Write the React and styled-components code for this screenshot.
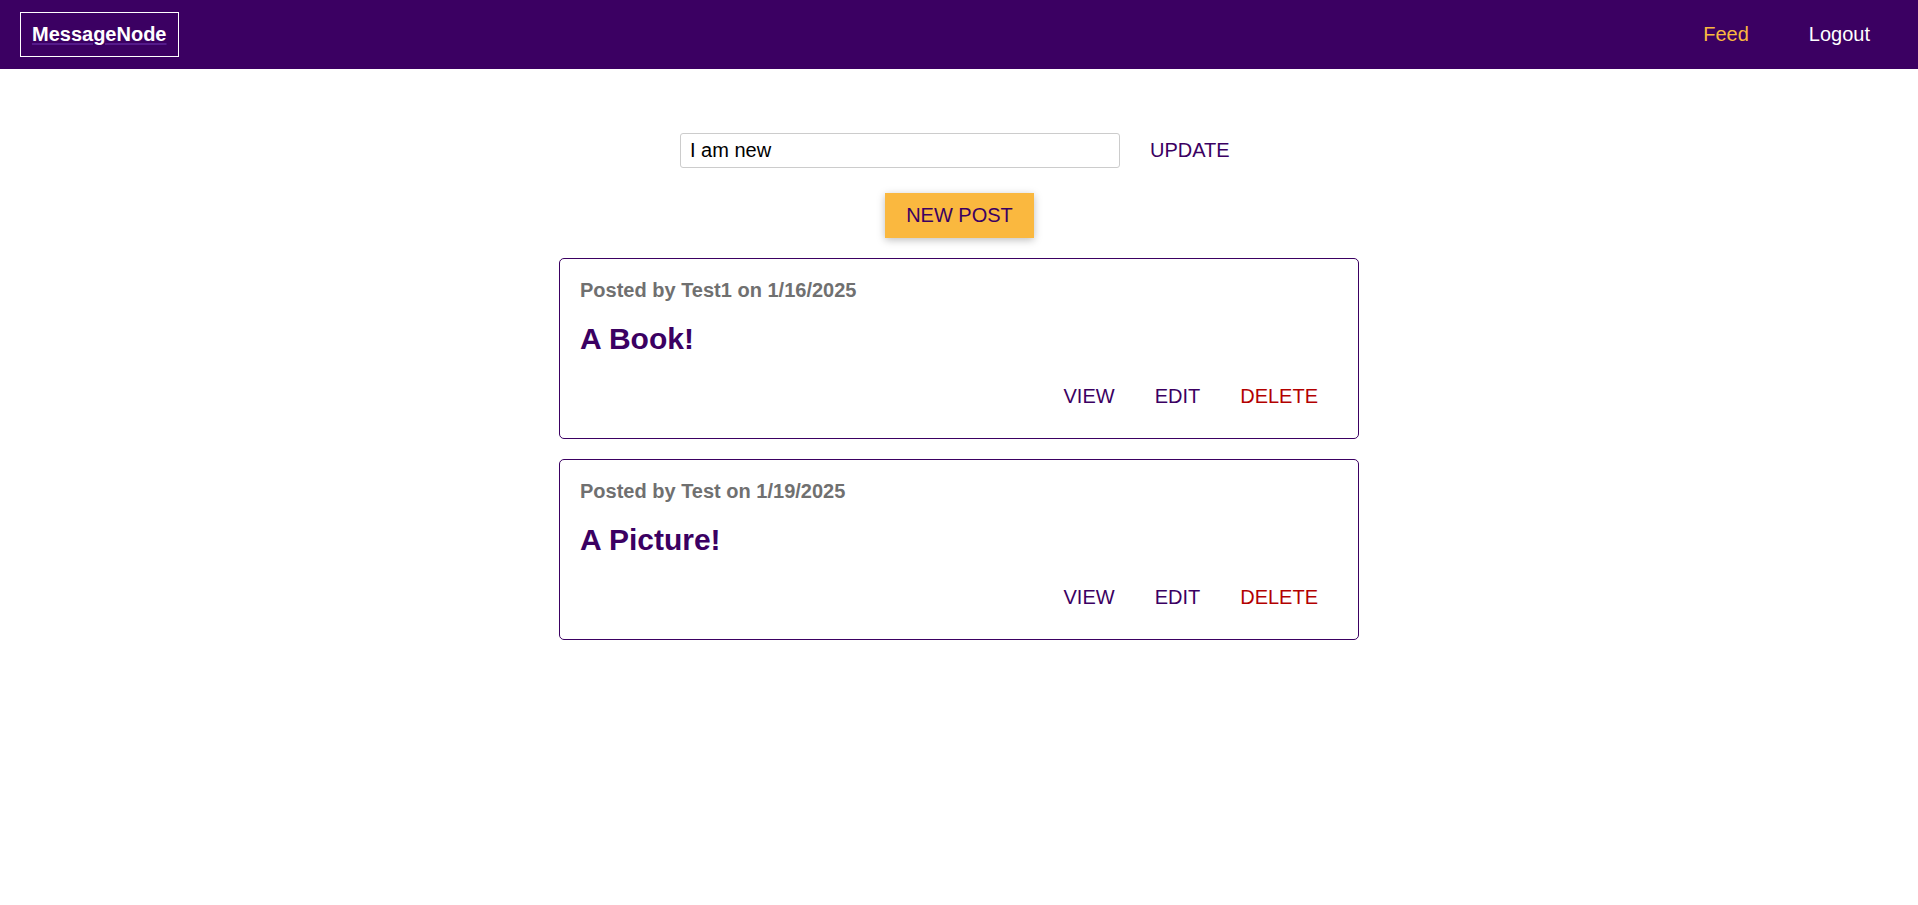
import React from "react";
import styled, { createGlobalStyle } from "styled-components";

const GlobalStyle = createGlobalStyle`
  * { box-sizing: border-box; }
  html, body { margin: 0; padding: 0; background: #ffffff; }
  body { font-family: "Liberation Sans", Arial, sans-serif; font-size: 20px; color: #000; }
`;

const Header = styled.header`
  height: 69px;
  background: #3b0062;
  display: flex;
  align-items: center;
  justify-content: space-between;
  padding: 0 48px 0 20px;
`;

const Logo = styled.a`
  display: block;
  border: 1px solid #ffffff;
  padding: 10px 11px;
  font-size: 20px;
  line-height: 23px;
  font-weight: bold;
  color: #ffffff;
  text-decoration: underline;
  text-decoration-color: #551a8b;
  text-underline-offset: 2px;
  cursor: pointer;
`;

const Nav = styled.nav`
  display: flex;
  align-items: center;
  gap: 60px;
`;

const NavLink = styled.a`
  font-size: 20px;
  line-height: 23px;
  color: ${(p) => (p.$active ? "#fab83f" : "#ffffff")};
  text-decoration: none;
  cursor: pointer;
`;

const Main = styled.main`
  padding-top: 60px;
`;

const Status = styled.section`
  width: 600px;
  margin: 0 auto;
`;

const StatusForm = styled.form`
  display: flex;
  align-items: center;
  padding: 0 0 0 21px;
`;

const TextInput = styled.input`
  flex: 0 0 440px;
  width: 440px;
  height: 35px;
  padding: 5px 9px;
  border: 1px solid #cccccc;
  border-radius: 3px;
  font: inherit;
  font-size: 20px;
  line-height: 23px;
  color: #000;
  outline: none;
`;

const Button = styled.button`
  font: inherit;
  font-size: 20px;
  line-height: 23px;
  padding: 10px 20px;
  border: ${(p) => (p.$raised ? "1px solid #fab83f" : "none")};
  border-radius: 0;
  background: ${(p) => (p.$raised ? "#fab83f" : "transparent")};
  color: ${(p) => (p.$danger ? "#b30000" : "#3b0062")};
  box-shadow: ${(p) => (p.$raised ? "0 2px 8px rgba(0, 0, 0, 0.26)" : "none")};
  margin-left: ${(p) => p.$ml || 0}px;
  cursor: pointer;
`;

const Control = styled.div`
  display: flex;
  justify-content: center;
  margin-top: 21px;
  padding-left: 1px;
`;

const Feed = styled.section`
  width: 800px;
  margin: 20px auto 0;
  display: flex;
  flex-direction: column;
  gap: 20px;
`;

const Card = styled.article`
  border: 1px solid #3b0062;
  border-radius: 5px;
  padding: 20px;
`;

const Meta = styled.h3`
  margin: 0;
  font-size: 20px;
  line-height: 23px;
  font-weight: bold;
  color: #707070;
`;

const Title = styled.h1`
  margin: 20px 0 19px;
  font-size: 30px;
  line-height: 34px;
  font-weight: bold;
  color: #3b0062;
`;

const Actions = styled.div`
  display: flex;
  justify-content: flex-end;
`;

const posts = [
  { id: 1, author: "Test1", date: "1/16/2025", title: "A Book!" },
  { id: 2, author: "Test", date: "1/19/2025", title: "A Picture!" },
];

export default function App() {
  return (
    <>
      <GlobalStyle />
      <Header>
        <Logo>MessageNode</Logo>
        <Nav>
          <NavLink $active>Feed</NavLink>
          <NavLink>Logout</NavLink>
        </Nav>
      </Header>
      <Main>
        <Status>
          <StatusForm onSubmit={(e) => e.preventDefault()}>
            <TextInput type="text" defaultValue="I am new" />
            <Button type="submit" $ml={10}>UPDATE</Button>
          </StatusForm>
        </Status>
        <Control>
          <Button $raised>NEW POST</Button>
        </Control>
        <Feed>
          {posts.map((p) => (
            <Card key={p.id}>
              <Meta>Posted by {p.author} on {p.date}</Meta>
              <Title>{p.title}</Title>
              <Actions>
                <Button>VIEW</Button>
                <Button>EDIT</Button>
                <Button $danger>DELETE</Button>
              </Actions>
            </Card>
          ))}
        </Feed>
      </Main>
    </>
  );
}
